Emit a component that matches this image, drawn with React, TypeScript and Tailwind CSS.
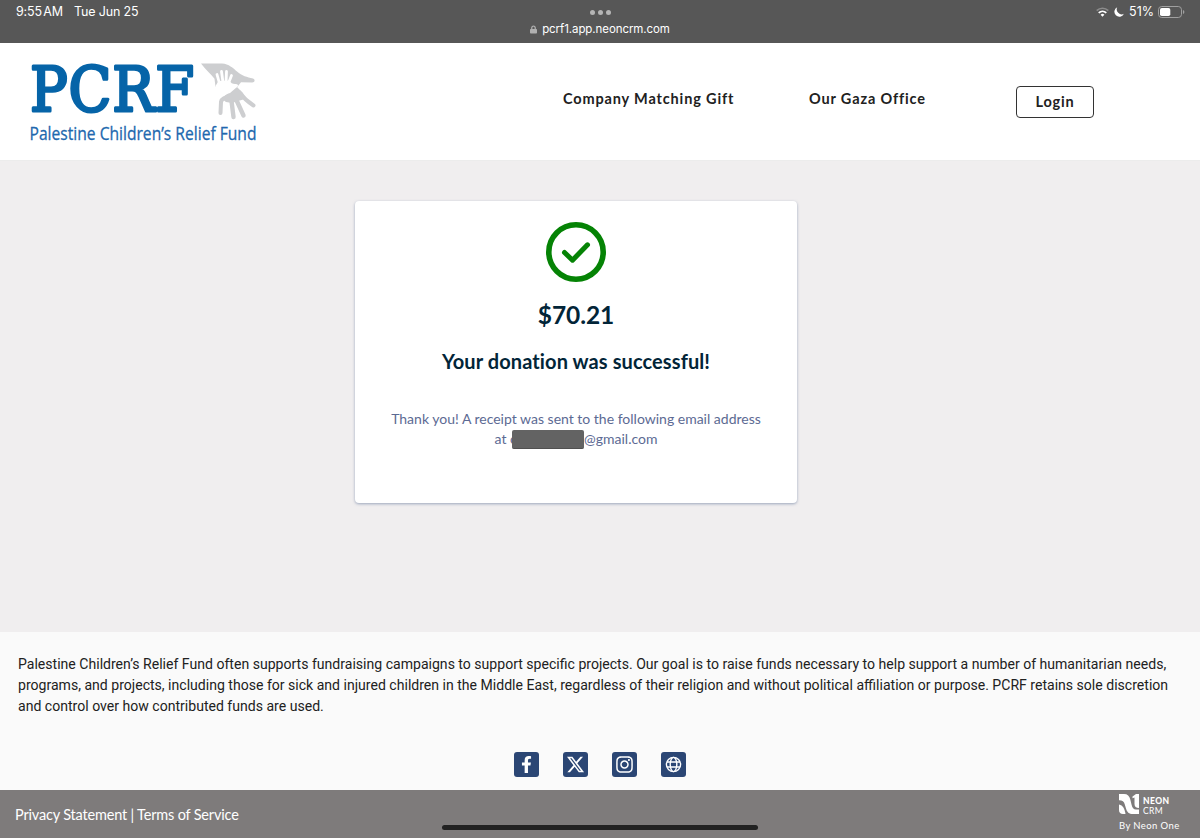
import React from 'react';
import { FaFacebookF, FaInstagram, FaLock } from 'react-icons/fa';
import { FaXTwitter } from 'react-icons/fa6';

const StatusBar: React.FC = () => (
  <div className="relative h-[43px] shrink-0 bg-[#575757] text-white font-[Inter,sans-serif]">
    <div className="flex items-center justify-between h-6 pl-4 pr-[15px] text-[12.5px]">
      <div className="flex gap-[11px] tracking-[-.15px]">
        <span className="[word-spacing:-2px]">9:55 AM</span>
        <span>Tue Jun 25</span>
      </div>
      <div className="flex items-center">
        <svg className="w-[13px] h-[10px] mr-[5px]" viewBox="0 0 13 10" fill="none" strokeWidth="1.7">
          <path d="M.7 3.6a8.3 8.3 0 0 1 11.6 0" stroke="#8b8b8b" />
          <path d="M2.7 5.8a5.5 5.5 0 0 1 7.6 0" stroke="#fff" />
          <path d="M6.5 9.7 4.6 7.7a2.7 2.7 0 0 1 3.8 0z" fill="#fff" />
        </svg>
        <svg className="w-[10px] h-[10px] mr-[5px]" viewBox="0 0 10 10" fill="#fff">
          <path d="M3.2.2A5 5 0 1 0 9.9 6.8 5 5 0 0 1 3.2.2z" />
        </svg>
        <span className="mr-1">51%</span>
        <svg className="w-[27px] h-3" viewBox="0 0 27 12">
          <rect x=".5" y=".5" width="23" height="11" rx="3.2" fill="none" stroke="#a0a0a0" />
          <rect x="2" y="2" width="10.3" height="8" rx="1.8" fill="#fff" />
          <path d="M25 4v4q1.4-.6 1.4-2T25 4z" fill="#a0a0a0" />
        </svg>
      </div>
    </div>
    <div className="absolute inset-x-0 top-[9.5px] flex justify-center gap-[3px]">
      <span className="w-[5px] h-[5px] rounded-full bg-[#b5b5b5]" />
      <span className="w-[5px] h-[5px] rounded-full bg-[#b5b5b5]" />
      <span className="w-[5px] h-[5px] rounded-full bg-[#b5b5b5]" />
    </div>
    <div className="absolute inset-x-0 top-[21px] flex justify-center items-center gap-[5px] text-[11.5px] leading-4 tracking-[-.08px]">
      <FaLock className="w-[7px] h-[9px] text-[#b0b0b0]" />
      <span>pcrf1.app.neoncrm.com</span>
    </div>
  </div>
);

const Logo: React.FC = () => (
  <svg className="w-[236px] h-[90px] overflow-visible" viewBox="26 57 236 90">
    <text
      x="30"
      y="110.5"
      textLength="165"
      lengthAdjust="spacingAndGlyphs"
      fontFamily="DejaVu Serif, serif"
      fontSize="62"
      fill="#0664a8"
      stroke="#0664a8"
      strokeWidth="3"
      strokeLinejoin="round"
    >
      PCRF
    </text>
    <text
      x="29.5"
      y="140"
      textLength="227"
      lengthAdjust="spacingAndGlyphs"
      fontFamily="Open Sans, sans-serif"
      fontSize="19"
      letterSpacing="0"
      fill="#2168ae"
      stroke="#2168ae"
      strokeWidth=".3"
    >
      Palestine Children’s Relief Fund
    </text>
    <path
      d="M201 63.5h21c7 .5 11 4.5 15 8 5 4.5 10 5.5 16 7 2.500 1 2 3.800-.8 4l-11.200-.3-4 5-10-3-11.500 2.500-1-8c-4-5-9-9-13.500-15.200z"
      fill="#cdced0"
    />
    <g stroke="#cdced0" strokeWidth="4" strokeLinecap="round" fill="none">
      <path d="M230 97q-8 0-9 5l-.5 11" />
      <path d="M231 97l2.500 20" strokeWidth="4.4" />
      <path d="M235 97l8.500 18.500" strokeWidth="4.4" />
      <path d="M239 92q6 8 14.500 13.500" />
    </g>
    <path d="M222 99q3-5 8-6l7-6 6 6 2 6-7 2-6 2-6-1z" fill="#cdced0" />
    <g stroke="#fff" strokeWidth="2.8" strokeLinecap="round" fill="none">
      <path d="M217 74.500l2.500 9" />
      <path d="M221.500 71.500l1.500 11" />
      <path d="M226.500 71.500l-.5 12" />
      <path d="M231.500 75.500l-3.500 9" />
    </g>
    <path
      d="M215.500 86l3-5 11-.5q2 4 6.500 3.500 3.500.5 1 3-5 1.500-7 5-5 3-9 5-5-4-5.500-11z"
      fill="#fff"
    />
  </svg>
);

const Header: React.FC = () => (
  <header className="flex h-[118px] shrink-0 pl-[26px] pt-[14px] bg-white border-b border-[#ececec] font-[Lato,sans-serif] text-[14.5px] tracking-[.85px] text-[#212121]">
    <Logo />
    <nav className="flex pl-[301px] pt-[31px] leading-[22px] font-bold">
      <a className="w-[246px]">Company Matching Gift</a>
      <a className="w-[207px]">Our Gaza Office</a>
    </nav>
    <button className="mt-[29px] w-[78px] h-[32px] rounded border border-[#333] text-center font-bold">
      Login
    </button>
  </header>
);

const DonationCard: React.FC = () => (
  <div className="flex flex-col items-center w-[442px] h-[302px] ml-[355px] mt-[40px] rounded bg-white shadow-[0_1px_3px_rgba(120,135,165,0.7)] font-[Lato,sans-serif] text-[#022538] [font-variant-ligatures:none]">
    <svg className="mt-[20.5px] w-[60px] h-[60px] shrink-0" viewBox="0 0 60 60" fill="none" stroke="#058305">
      <circle cx="30" cy="30" r="27.2" strokeWidth="5.6" />
      <path d="M18.5 30.5l8 7.7L41.5 22.8" strokeWidth="5" strokeLinecap="round" strokeLinejoin="round" />
    </svg>
    <div className="mt-[15.5px] text-[24.5px] leading-9 font-bold tracking-[-.1px]">$70.21</div>
    <div className="mt-[13px] text-[20px] leading-[30px] font-bold tracking-[.1px]">Your donation was successful!</div>
    <div className="mt-[33px] text-center text-[14px] leading-5 text-[#5c6a93]">
      <p>Thank you! A receipt was sent to the following email address</p>
      <p className="flex justify-center">
        <span>at&nbsp;</span>
        <span className="w-[2px] overflow-hidden">c</span>
        <span className="w-[72px] h-[19px] mt-px rounded-[2px] bg-[#636363] border-b border-[#505050]" />
        <span>@gmail.com</span>
      </p>
    </div>
  </div>
);

const GlobeIcon: React.FC = () => (
  <svg className="w-[17px] h-[17px]" viewBox="0 0 17 17" fill="none" stroke="currentColor" strokeWidth="1.4">
    <circle cx="8.5" cy="8.5" r="7.1" />
    <ellipse cx="8.5" cy="8.5" rx="3.3" ry="7.1" />
    <path d="M2 6h13M2 11h13" />
  </svg>
);

const SocialLinks: React.FC = () => {
  const box = 'flex items-center justify-center w-[25px] h-[25px] rounded-[3px] bg-[#2b4674] text-white';
  return (
    <div className="flex justify-center gap-6">
      <a className={box}><FaFacebookF className="w-[17px] h-[17px]" /></a>
      <a className={box}><FaXTwitter className="w-[19px] h-[19px]" /></a>
      <a className={box}><FaInstagram className="w-[19px] h-[19px]" /></a>
      <a className={box}><GlobeIcon /></a>
    </div>
  );
};

const Footer: React.FC = () => (
  <footer className="relative flex justify-between h-[48px] shrink-0 bg-[#7e7b7b] text-white font-[Lato,sans-serif]">
    <div className="pl-[15px] pt-[14px] text-[14.5px] tracking-[-.18px] leading-[22px]">
      <a>Privacy Statement</a> | <a>Terms of Service</a>
    </div>
    <div className="w-[81px] pt-[4px]">
      <div className="flex gap-[4px]">
        <svg className="w-5 h-5" viewBox="0 0 20 20" fill="#fff">
          <path d="M0 0h5c3.500 0 5.500 2 6.300 5.500l1.200 5C13.300 14 14.500 15.500 17 15.500h3V20h-6c-4 0-6-1.800-7-5.500L5.800 10.500C5 7.500 3.500 6.500 0 6.300z" />
          <path d="M0 10.500c4 .8 5.500 4 6.500 9.500H4c-2.500 0-4-1.500-4-4z" />
          <path d="M13.500 2.500 17 0h3v14c-3 0-4.500-1.200-4.500-4V3.500l-2 .8z" />
        </svg>
        <div className="pt-[3px] text-[8.5px] leading-[9.5px] tracking-[.4px]">
          <div className="font-black">NEON</div>
          <div>CRM</div>
        </div>
      </div>
      <div className="mt-[4px] text-[9.5px] leading-3 tracking-[.4px] whitespace-nowrap">By Neon One</div>
    </div>
    <div className="absolute left-[442px] bottom-[8px] w-[316px] h-[5px] rounded-full bg-[#222]" />
  </footer>
);

export default function App() {
  return (
    <div className="flex flex-col w-[1200px] h-[838px] overflow-hidden bg-[#f0eeef]">
      <StatusBar />
      <Header />
      <main className="h-[471px] shrink-0 flow-root">
        <DonationCard />
      </main>
      <section className="h-[158px] shrink-0 px-[18px] pt-[21.5px] bg-[#fafafa]">
        <div className="mb-[35px] font-[Roboto,sans-serif] text-[14.07px] leading-[21px] text-[#212121] whitespace-nowrap">
          <p>Palestine Children’s Relief Fund often supports fundraising campaigns to support specific projects. Our goal is to raise funds necessary to help support a number of humanitarian needs,</p>
          <p>programs, and projects, including those for sick and injured children in the Middle East, regardless of their religion and without political affiliation or purpose. PCRF retains sole discretion</p>
          <p>and control over how contributed funds are used.</p>
        </div>
        <SocialLinks />
      </section>
      <Footer />
    </div>
  );
}
